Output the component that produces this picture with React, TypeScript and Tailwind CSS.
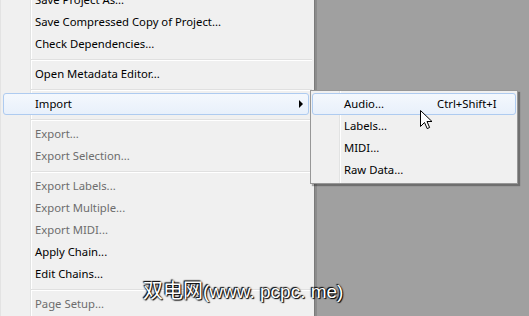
import React from "react";

type Item = { label?: string; disabled?: boolean; sep?: boolean; sub?: boolean; active?: boolean };

const mainItems: Item[] = [
  { label: "Save Project As..." },
  { label: "Save Compressed Copy of Project..." },
  { label: "Check Dependencies..." },
  { sep: true },
  { label: "Open Metadata Editor..." },
  { sep: true },
  { label: "Import", sub: true, active: true },
  { sep: true },
  { label: "Export...", disabled: true },
  { label: "Export Selection...", disabled: true },
  { sep: true },
  { label: "Export Labels...", disabled: true },
  { label: "Export Multiple...", disabled: true },
  { label: "Export MIDI...", disabled: true },
  { label: "Apply Chain..." },
  { label: "Edit Chains..." },
  { sep: true },
  { label: "Page Setup...", disabled: true },
];

const subItems = [
  { label: "Audio...", shortcut: "Ctrl+Shift+I", active: true },
  { label: "Labels..." },
  { label: "MIDI..." },
  { label: "Raw Data..." },
];

const font = "font-['Noto_Sans',sans-serif] text-[11.3px]";

const Separator: React.FC = () => (
  <div className="h-[8px] shrink-0 pt-[4px] pl-[30px] pr-[2px]">
    <div className="border-t border-b border-t-[#e0e0e0] border-b-white" />
  </div>
);

const Cursor: React.FC = () => (
  <svg width="13" height="20" viewBox="0 0 13 20" className="absolute left-[420px] top-[110px]">
    <path
      d="M0.5 0.5 L0.5 16.5 L4.5 12.5 L7.2 18.6 L9.6 17.5 L7 11.5 L12 11.5 Z"
      fill="#fff"
      stroke="#000"
      strokeWidth="1"
      strokeLinejoin="miter"
    />
  </svg>
);

export default function App() {
  return (
    <div className={`relative w-[529px] h-[316px] overflow-hidden bg-[#a0a0a0] ${font}`}>
      {/* main menu */}
      <div className="w-[317px] h-full flex">
        <div className="w-[315px] h-[340px] shrink-0 border-l border-l-[#e3e3e3] border-r border-r-[#7a7a7a] bg-[linear-gradient(to_right,#f0f0f0_29px,#e2e3e3_29px,#e2e3e3_30px,#ffffff_30px,#ffffff_31px,#f0f0f0_31px)] flex flex-col -mt-[11px]">
          {mainItems.map((it, i) =>
            it.sep ? (
              <Separator key={i} />
            ) : (
              <div
                key={i}
                className={`h-[22px] shrink-0 ml-[2px] mr-[5px] pl-[31px] flex items-center rounded-[3px] border ${
                  it.active
                    ? "border-[#aecbf0] bg-[linear-gradient(to_bottom,#f4f8fd,#e8f0fb)]"
                    : "border-transparent"
                } ${it.disabled ? "text-[#6d6d6d]" : "text-black"}`}
              >
                <span className="leading-none">{it.label}</span>
                {it.sub && (
                  <span className="ml-auto mr-[5px] w-0 h-0 border-y-[4px] border-y-transparent border-l-[4px] border-l-black" />
                )}
              </div>
            )
          )}
        </div>
        <div className="w-[2px] h-full shrink-0 bg-[#8c8c8c]" />
      </div>

      {/* submenu */}
      <div className="absolute left-[310px] top-[90px] w-[208px] border border-[#979797] bg-[linear-gradient(to_right,#f0f0f0_28px,#e2e3e3_28px,#e2e3e3_29px,#ffffff_29px,#ffffff_30px,#f0f0f0_30px)] py-[2px] shadow-[2px_2px_1px_rgba(0,0,0,0.3)]">
        {subItems.map((it, i) => (
          <div
            key={i}
            className={`h-[22px] mx-[1px] pl-[31px] flex items-center rounded-[3px] border text-black ${
              it.active
                ? "border-[#aecbf0] bg-[linear-gradient(to_bottom,#f4f8fd,#e8f0fb)]"
                : "border-transparent"
            }`}
          >
            <span className="w-[93px] leading-none">{it.label}</span>
            {it.shortcut && <span className="leading-none">{it.shortcut}</span>}
          </div>
        ))}
      </div>

      <Cursor />

      {/* watermark */}
      <div className="absolute left-[143px] top-[280px] whitespace-nowrap text-white leading-none [text-shadow:0_0_2px_#000,1px_1px_1px_#000,-1px_-1px_1px_#000]">
        <span className="font-['Noto_Sans_CJK_SC',sans-serif] text-[20px]">双电网</span>
        <span className="font-['Liberation_Sans','Noto_Sans_CJK_SC',sans-serif] text-[19px]">(www. pcpc. me)</span>
      </div>
    </div>
  );
}
